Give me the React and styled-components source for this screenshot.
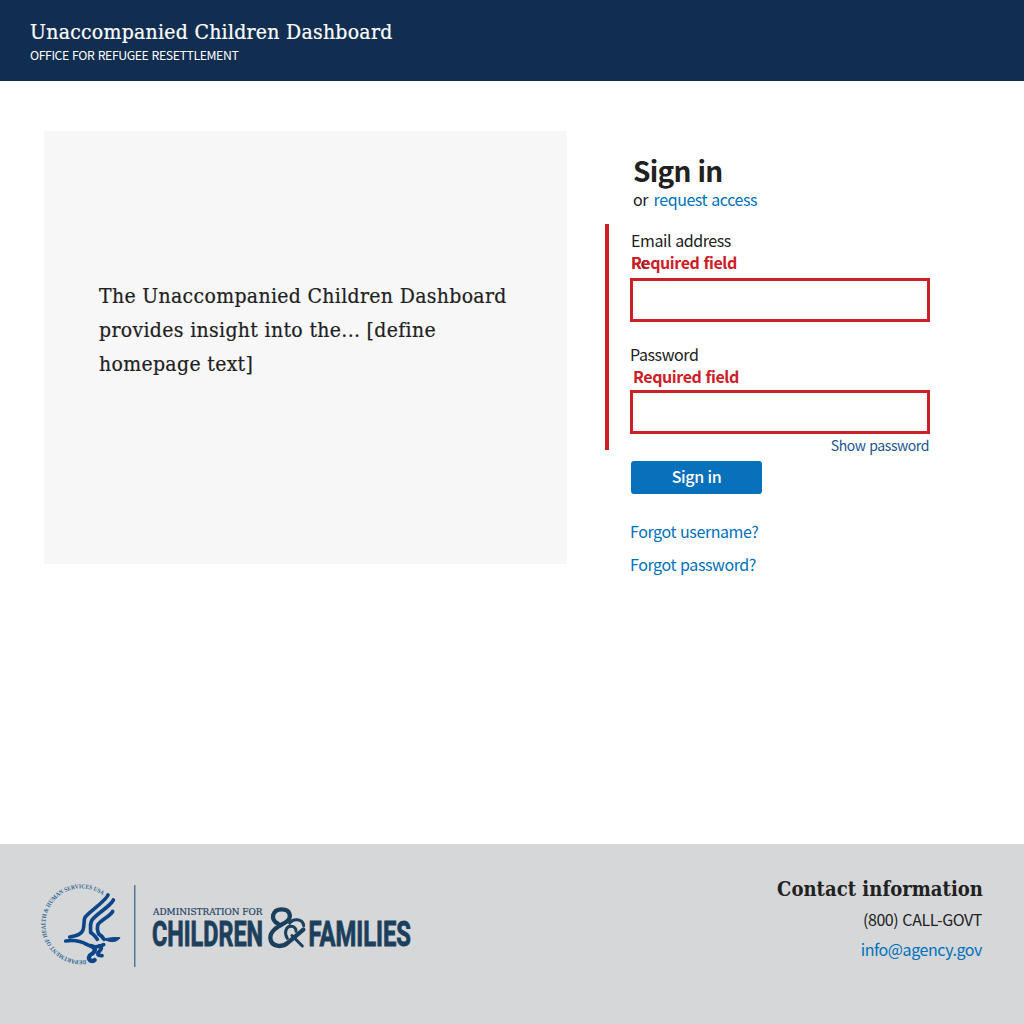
import React from "react";
import styled, { createGlobalStyle } from "styled-components";

const sans = `"Noto Sans CJK SC", "Noto Sans", sans-serif`;
const serif = `"DejaVu Serif Condensed", "DejaVu Serif", serif`;

const Global = createGlobalStyle`
  * { box-sizing: border-box; }
  body { margin: 0; background: #fff; color: #212121; font-family: ${sans}; font-size: 16px; letter-spacing: -0.42px; word-spacing: 0.9px; }
  a { color: #0071bc; text-decoration: none; }
`;

const Page = styled.div`
  display: flex;
  flex-direction: column;
  height: 1024px;
  width: 1024px;
`;

const Header = styled.header`
  height: 81px;
  padding: 19px 30px 0;
  background: #112e51;
  color: #fff;
`;

const SiteTitle = styled.div`
  font: 400 21px/26px ${serif};
  letter-spacing: 0.27px;
  word-spacing: 0;
  -webkit-text-stroke: 0.2px currentColor;
  white-space: nowrap;
`;

const SiteSubtitle = styled.div`
  margin-top: 1px;
  font-size: 12.3px;
  line-height: 18px;
`;

const Main = styled.main`
  display: flex;
  flex: 1;
  padding: 50px 0 0 44px;
`;

const Intro = styled.section`
  display: flex;
  align-items: center;
  width: 523px;
  height: 433px;
  padding: 0 40px 35px 55px;
  background: #f7f7f7;
`;

const IntroText = styled.p`
  margin: 0;
  font: 400 21px/34px ${serif};
  letter-spacing: 0.33px;
  word-spacing: 0;
  -webkit-text-stroke: 0.2px currentColor;
  white-space: pre-line;
`;

const Panel = styled.section`
  display: flex;
  flex-direction: column;
  width: 325px;
  margin-left: 38px;
  padding-top: 21px;
`;

const Title = styled.h1`
  margin: 0 0 0 28px;
  font-size: 28px;
  font-weight: 700;
  letter-spacing: -0.7px;
  line-height: 36px;
`;

const Subline = styled.div`
  display: flex;
  gap: 5.5px;
  margin: -1px 0 1px 28px;
  line-height: 24px;
`;

const ErrorGroup = styled.div`
  height: 226px;
  margin-top: 12px;
  padding: 5px 0 0 21px;
  border-left: 4px solid #cd2026;
`;

const Field = styled.div`
  display: flex;
  flex-direction: column;
  margin-bottom: ${(p) => p.$gap}px;
`;

const Label = styled.label`
  padding-left: ${(p) => p.$inset}px;
  line-height: 22px;
`;

const ErrorText = styled.span`
  position: relative;
  z-index: 0;
  padding-left: ${(p) => p.$inset}px;
  color: #cd2026;
  font-weight: 700;
  line-height: 22px;

  &::before {
    content: "${(p) => p.$ghost || ""}";
    position: absolute;
    z-index: -1;
    left: 1px;
    top: 0;
    color: #212121;
    font-weight: 400;
  }
`;

const Input = styled.input`
  width: 300px;
  height: 44px;
  margin-top: ${(p) => p.$top}px;
  border: 3px solid #cd2026;
  outline: none;
  background: #fff;
`;

const ShowPassword = styled.a`
  align-self: flex-end;
  margin-right: 1px;
  font-size: 14px;
  line-height: 22px;
  && { color: #205493; }
`;

const Submit = styled.button`
  width: 131px;
  height: 33px;
  margin: 11px 0 0 26px;
  padding: 0 0 2px;
  border: 0;
  border-radius: 3px;
  background: #0871bb;
  color: #fff;
  font: 500 16px/31px ${sans};
  letter-spacing: -0.36px;
  word-spacing: 0.5px;
`;

const HelpLinks = styled.nav`
  display: flex;
  flex-direction: column;
  margin: 21px 0 0 25px;
  line-height: 33px;
`;

const Footer = styled.footer`
  display: flex;
  justify-content: space-between;
  height: 180px;
  padding: 31px 42px 0 36px;
  background: #d6d7d9;
`;

const Contact = styled.address`
  font-style: normal;
  text-align: right;
  line-height: 30px;
`;

const ContactTitle = styled.h2`
  margin: 0 -1px 1px 0;
  font: 700 20px/28px ${serif};
  letter-spacing: 0.05px;
  word-spacing: 0;
`;

const ContactLine = styled.div``;

const LogoMark = styled.svg`
  letter-spacing: 0;
  word-spacing: 0;
`;

const navy = "#1c405c";

function Logo() {
  return (
    <LogoMark width="384" height="100" viewBox="36 875 384 100" aria-label="Administration for Children and Families">
      <path id="seal" d="M86 960 A36 36 0 1 1 107 899" fill="none" />
      <text fill="#2c6690" fontFamily="Liberation Serif" fontWeight="700" fontSize="6.2">
        <textPath href="#seal" textLength="140" lengthAdjust="spacingAndGlyphs">DEPARTMENT OF HEALTH &amp; HUMAN SERVICES USA</textPath>
      </text>
      <g transform="translate(30 870) scale(.33333)" fill="none" stroke="#0d4688" strokeWidth="11" strokeLinecap="round" strokeLinejoin="round">
        <path d="M234 75 C228 92 175 128 165 142 C160 152 164 166 159 180 C153 196 134 198 119 201" />
        <path d="M250 90 C243 108 198 132 186 150 C179 162 182 176 182 188 C190 192 196 200 202 208" />
        <path d="M248 124 C240 140 208 152 203 166 C200 178 204 184 206 192 C214 196 218 202 222 208" />
        <path d="M215 206 C232 208 240 200 270 203 C262 215 246 218 232 212 Z" fill="#0d4688" strokeWidth="3" />
        <path d="M107 213 C132 209 154 214 170 223 C184 231 200 236 221 224" />
        <path d="M184 228 C196 234 198 242 188 250 C176 256 173 266 182 272 C188 274 192 272 194 270" strokeWidth="13" />
        <path d="M208 228 C218 232 214 238 208 244 C200 252 202 258 216 257" strokeWidth="11" />
      </g>
      <rect x="134" y="885" width="1.5" height="82" fill="#55799a" />
      <text x="153" y="915" fontFamily="DejaVu Serif Condensed, DejaVu Serif" fontSize="9.7" fill={navy} stroke={navy} strokeWidth=".2" textLength="109.5" lengthAdjust="spacingAndGlyphs">ADMINISTRATION FOR</text>
      <g fontFamily="Roboto" fontWeight="700" fontSize="35.5" fill={navy} stroke={navy} strokeWidth=".9">
        <text x="152" y="946.3" textLength="111" lengthAdjust="spacingAndGlyphs">CHILDREN</text>
        <text x="308.5" y="946.3" textLength="102.5" lengthAdjust="spacingAndGlyphs">FAMILIES</text>
      </g>
      <g transform="translate(140 870) scale(.33333)" fill="none" stroke={navy} strokeWidth="13" strokeLinecap="round">
        <path d="M414 161 C389 149 397 118 425 118 C452 118 457 143 438 156 C420 167 390 180 391 204 C393 231 426 234 444 218 L490 179" />
        <path d="M442 205 C431 188 438 169 453 169 C464 169 469 177 468 184" strokeWidth="9" />
        <path d="M449 160 C458 145 488 144 491 167" strokeWidth="9" />
        <path d="M456 197 L487 228" strokeWidth="9" />
      </g>
    </LogoMark>
  );
}

export default function App() {
  return (
    <>
      <Global />
      <Page>
        <Header>
          <SiteTitle>Unaccompanied Children Dashboard</SiteTitle>
          <SiteSubtitle>OFFICE FOR REFUGEE RESETTLEMENT</SiteSubtitle>
        </Header>
        <Main>
          <Intro>
            <IntroText>{"The Unaccompanied Children Dashboard\nprovides insight into the... [define\nhomepage text]"}</IntroText>
          </Intro>
          <Panel>
            <Title>Sign in</Title>
            <Subline>or <a href="#request">request access</a></Subline>
            <ErrorGroup>
              <Field $gap={21}>
                <Label $inset={1} htmlFor="email">Email address</Label>
                <ErrorText $inset={1} $ghost="Re">Required field</ErrorText>
                <Input id="email" $top={5} />
              </Field>
              <Field $gap={0}>
                <Label $inset={0} htmlFor="password">Password</Label>
                <ErrorText $inset={3}>Required field</ErrorText>
                <Input id="password" type="password" $top={3} />
                <ShowPassword href="#show">Show password</ShowPassword>
              </Field>
            </ErrorGroup>
            <Submit>Sign in</Submit>
            <HelpLinks>
              <a href="#username">Forgot username?</a>
              <a href="#reset">Forgot password?</a>
            </HelpLinks>
          </Panel>
        </Main>
        <Footer>
          <Logo />
          <Contact>
            <ContactTitle>Contact information</ContactTitle>
            <ContactLine>(800) CALL-GOVT</ContactLine>
            <ContactLine><a href="#mail">info@agency.gov</a></ContactLine>
          </Contact>
        </Footer>
      </Page>
    </>
  );
}
